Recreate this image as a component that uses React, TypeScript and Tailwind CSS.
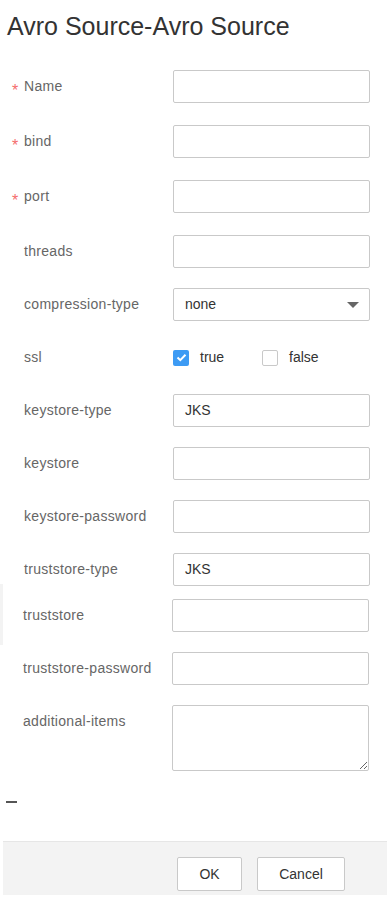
import { ReactNode } from "react";

const font = { fontFamily: '"Liberation Sans", Arial, sans-serif' };

function Label({ text, required, shift }: { text: string; required?: boolean; shift?: boolean }) {
  return (
    <div className={`flex h-[33px] shrink-0 items-center ${shift ? "w-[172px] pl-[11px]" : "w-[173px] pl-[12px]"}`}>
      <span className="relative top-[4px] w-[12px] text-[16px] leading-none text-[#f56c6c]">{required ? "*" : ""}</span>
      <span className="text-[14px] tracking-[0.3px] text-[#666]">{text}</span>
    </div>
  );
}

function Input({ value }: { value?: string }) {
  return (
    <div className="flex h-[33px] w-[197px] items-center rounded-[2px] border border-[#c9c9c9] bg-white px-[11px] text-[14px] text-[#333]">
      {value}
    </div>
  );
}

function Row({ label, required, mt, shift, children }: { label: string; required?: boolean; mt: string; shift?: boolean; children: ReactNode }) {
  return (
    <div className={`flex items-start ${mt}`}>
      <Label text={label} required={required} shift={shift} />
      {children}
    </div>
  );
}

function Check({ checked }: { checked?: boolean }) {
  if (checked) {
    return (
      <span className="flex h-[16px] w-[16px] shrink-0 items-center justify-center rounded-[2px] bg-[#3d9bf4]">
        <svg width="11" height="9" viewBox="0 0 11 9">
          <path d="M1.5 4.5 L4.3 7.2 L9.5 1.8" fill="none" stroke="white" strokeWidth="2" />
        </svg>
      </span>
    );
  }
  return <span className="block h-[16px] w-[16px] shrink-0 rounded-[2px] border border-[#c9c9c9] bg-white" />;
}

export default function App() {
  return (
    <div className="min-h-[907px] bg-white" style={font}>
      <div className="pl-[7px] pt-[10px] text-[25px] leading-[32px] text-[#333]">Avro Source-Avro Source</div>

      <Row label="Name" required mt="mt-[28px]"><Input /></Row>
      <Row label="bind" required mt="mt-[22px]"><Input /></Row>
      <Row label="port" required mt="mt-[22px]"><Input /></Row>
      <Row label="threads" mt="mt-[22px]"><Input /></Row>
      <Row label="compression-type" mt="mt-[20px]">
        <div className="flex h-[33px] w-[197px] items-center justify-between rounded-[2px] border border-[#c9c9c9] bg-white pl-[11px] pr-[10px] text-[14px] text-[#333]">
          none
          <svg width="12" height="6" viewBox="0 0 12 6">
            <path d="M0 0 H12 L6 6 Z" fill="#666" />
          </svg>
        </div>
      </Row>
      <Row label="ssl" mt="mt-[20px]">
        <div className="flex h-[33px] items-center text-[14px] text-[#333]">
          <Check checked />
          <span className="ml-[11px] w-[62px]">true</span>
          <Check />
          <span className="ml-[11px]">false</span>
        </div>
      </Row>
      <Row label="keystore-type" mt="mt-[20px]"><Input value="JKS" /></Row>
      <Row label="keystore" mt="mt-[20px]"><Input /></Row>
      <Row label="keystore-password" mt="mt-[20px]"><Input /></Row>
      <Row label="truststore-type" mt="mt-[20px]"><Input value="JKS" /></Row>

      <div className="mt-[-2px] flex">
        <div className="w-[3px] bg-[#f3f3f3]" />
        <div className="flex items-start pb-[13px] pt-[15px]">
          <div className="flex h-[33px] w-[169px] shrink-0 items-center pl-[20px] text-[14px] tracking-[0.3px] text-[#666]">truststore</div>
          <Input />
        </div>
      </div>

      <Row label="truststore-password" mt="mt-[7px]" shift><Input /></Row>
      <Row label="additional-items" mt="mt-[20px]" shift>
        <textarea readOnly className="h-[66px] w-[197px] rounded-[2px] border border-[#c9c9c9] bg-white px-[11px] py-[6px] text-[14px] outline-none" />
      </Row>

      <div className="ml-[6px] mt-[30px] h-[2px] w-[11px] bg-[#555]" />

      <div className="ml-[3px] mt-[38px] flex h-[54px] gap-[15px] border-t border-[#e6e6e6] bg-[#f3f3f3] pl-[174px] pt-[15px]">
        <button className="h-[34px] w-[65px] rounded-[2px] border border-[#c9c9c9] bg-white text-[14px] text-[#333]">OK</button>
        <button className="h-[34px] w-[88px] rounded-[2px] border border-[#c9c9c9] bg-white text-[14px] text-[#333]">Cancel</button>
      </div>
    </div>
  );
}
